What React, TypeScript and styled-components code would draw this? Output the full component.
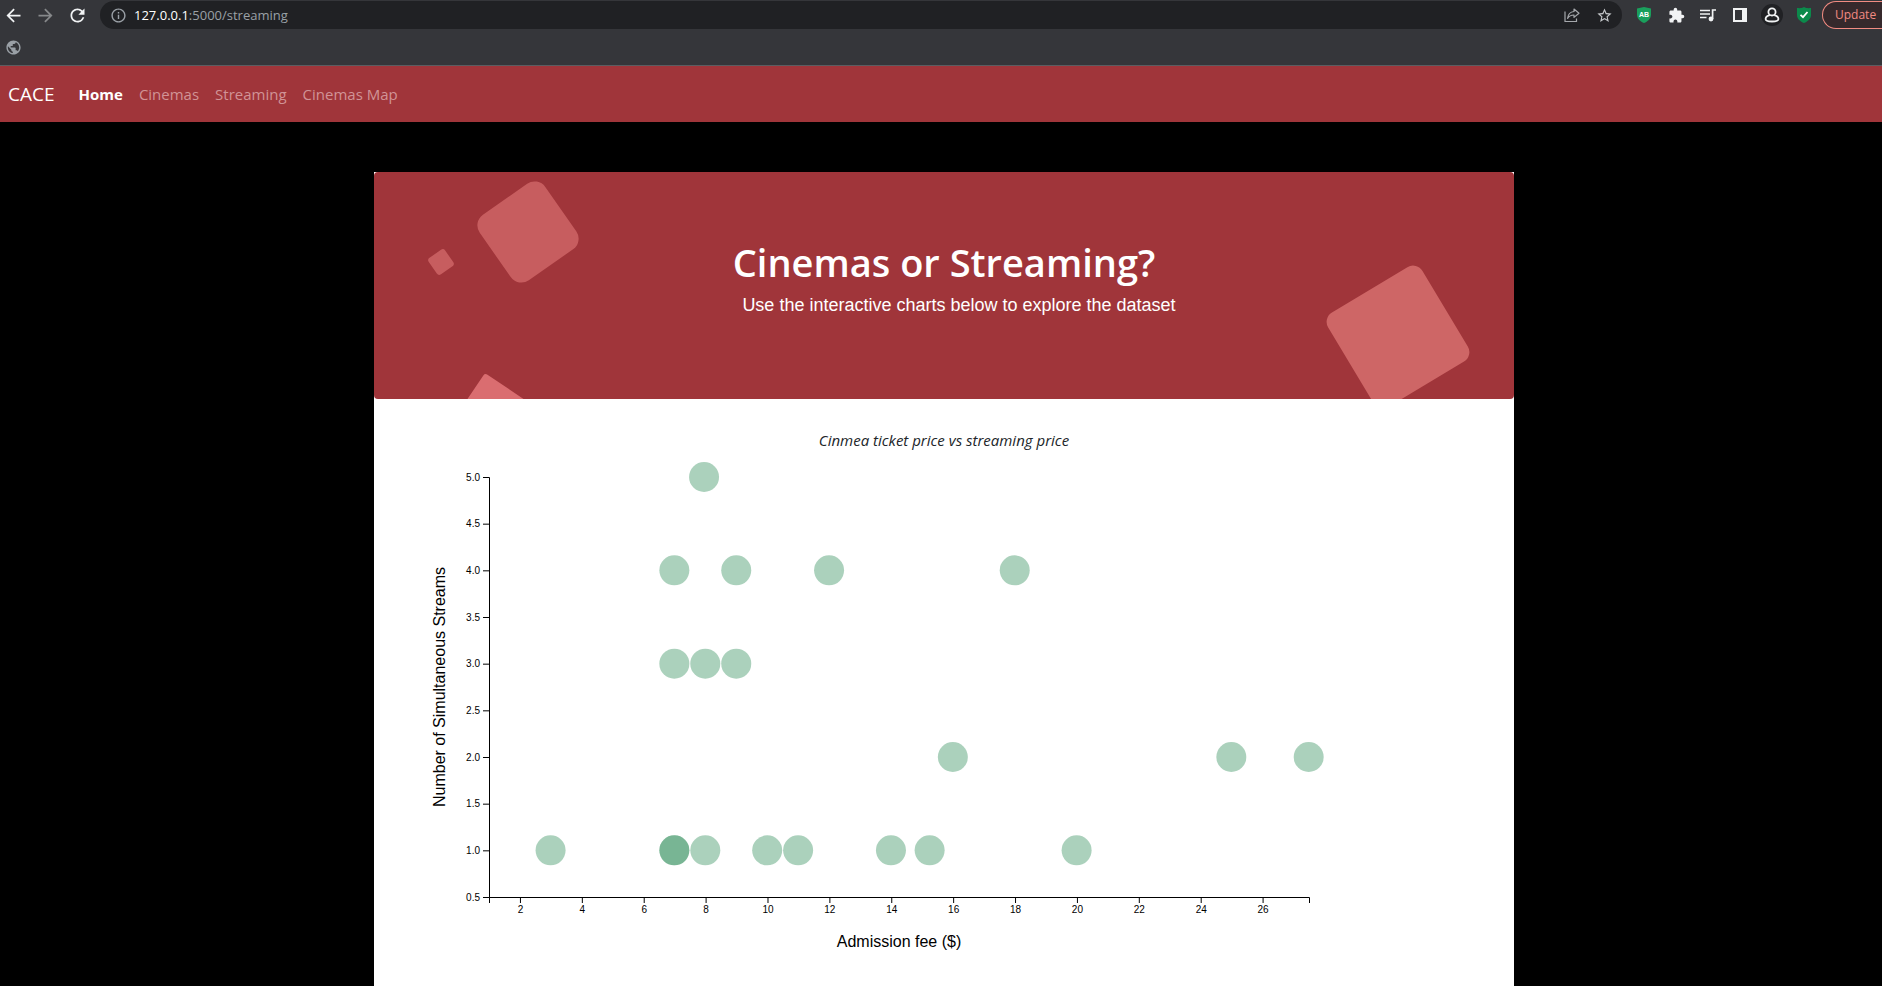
import React from "react";
import styled, { createGlobalStyle } from "styled-components";
import {
  MdArrowBack,
  MdArrowForward,
  MdExtension,
  MdInfoOutline,
  MdPublic,
  MdRefresh,
  MdStarOutline,
} from "react-icons/md";

const uiFont = `"Segoe UI", "Open Sans", "Noto Sans", sans-serif`;
const arial = `Arial, "Liberation Sans", sans-serif`;

const GlobalStyle = createGlobalStyle`
  *, *::before, *::after { box-sizing: border-box; }
  body {
    margin: 0;
    background: #000;
    font-family: ${uiFont};
    font-size: 16px;
    line-height: 24px;
  }
`;

const Page = styled.div`
  display: flex;
  flex-direction: column;
  min-height: 100vh;
`;

/* Browser chrome */

const Chrome = styled.header`
  background: #35363a;
  border-bottom: 1px solid #5b5d61;
  overflow: hidden;
`;

const Toolbar = styled.div`
  display: flex;
  align-items: center;
  height: 30px;
`;

const IconButton = styled.button<{ $dim?: boolean }>`
  display: flex;
  align-items: center;
  justify-content: center;
  flex: none;
  width: 32px;
  height: 28px;
  padding: 0;
  border: 0;
  background: none;
  color: ${(p) => (p.$dim ? "#86888a" : "#f1f3f4")};
`;

const NavButtons = styled.div`
  display: flex;
  margin-left: -3px;
  margin-right: 7px;
`;

const AddressBar = styled.div`
  display: flex;
  align-items: center;
  flex: 1;
  min-width: 0;
  height: 28px;
  padding: 0 2px;
  border-radius: 14px;
  background: #202124;
  color: #9aa0a6;
  font-size: 13px;
  line-height: 20px;
`;

const Url = styled.div`
  flex: 1;
  white-space: nowrap;
`;

const Host = styled.span`
  color: #fff;
`;

const Extensions = styled.div`
  display: flex;
  margin-left: 6px;
  margin-right: 2px;
`;

const Avatar = styled.span`
  display: flex;
  align-items: center;
  justify-content: center;
  width: 22px;
  height: 22px;
  border-radius: 50%;
  background: #202124;
`;

const UpdateButton = styled.button`
  flex: none;
  width: 60px;
  height: 28px;
  padding: 0 0 0 12px;
  border: 1px solid #f28b82;
  border-right: 0;
  border-radius: 14px 0 0 14px;
  background: #36292c;
  color: #f28b82;
  font-family: ${uiFont};
  font-size: 12px;
  line-height: 24px;
  text-align: left;
`;

const BookmarksBar = styled.div`
  display: flex;
  align-items: center;
  height: 35px;
  padding: 0 5px;
  color: #9aa0a6;
`;

/* Site */

const Navbar = styled.nav`
  display: flex;
  align-items: center;
  height: 56px;
  padding: 0 8px;
  background: #a0353a;
`;

const Brand = styled.a`
  margin-right: 16px;
  color: #fff;
  font-size: 19px;
  text-decoration: none;
`;

const NavLink = styled.a<{ $active?: boolean }>`
  padding: 0 8px;
  color: ${(p) => (p.$active ? "#fff" : "#d19396")};
  font-size: 15px;
  font-weight: ${(p) => (p.$active ? 700 : 400)};
  text-decoration: none;
`;

const Main = styled.main`
  display: flex;
  flex: 1;
  justify-content: center;
  padding: 50px 0 0 6px;
`;

const Card = styled.div`
  width: 100%;
  max-width: 1140px;
  background: #fff;
`;

const Hero = styled.section`
  position: relative;
  height: 227px;
  padding-top: 66px;
  border-radius: 4px;
  background: #a0353a;
  color: #fff;
  text-align: center;
  overflow: hidden;
`;

const HeroShapes = styled.svg`
  position: absolute;
  inset: 0;
`;

const HeroTitle = styled.h1`
  position: relative;
  margin: 0 0 7px;
  font-size: 38px;
  font-weight: 600;
  line-height: 48px;
`;

const HeroText = styled.p`
  position: relative;
  margin: 0;
  padding-left: 30px;
  font-family: ${arial};
  font-size: 18px;
  line-height: 24px;
`;

const ChartTitle = styled.h2`
  margin: 29px 0 8px;
  color: #212529;
  font-size: 15px;
  font-style: italic;
  font-weight: 500;
  line-height: 24px;
  text-align: center;
`;

const ChartSvg = styled.svg`
  display: block;
  width: 100%;
  height: 500px;
  font-family: ${arial};
`;

const PLOT_W = 820;
const PLOT_H = 420;
const X_MIN = 1;
const X_MAX = 27.5;
const Y_MIN = 0.5;
const Y_MAX = 5;

const sx = (v: number) => ((v - X_MIN) / (X_MAX - X_MIN)) * PLOT_W;
const sy = (v: number) => PLOT_H - ((v - Y_MIN) / (Y_MAX - Y_MIN)) * PLOT_H;

const xTicks = [2, 4, 6, 8, 10, 12, 14, 16, 18, 20, 22, 24, 26];
const yTicks = [0.5, 1, 1.5, 2, 2.5, 3, 3.5, 4, 4.5, 5];

const points: [number, number][] = [
  [7.95, 5],
  [6.99, 4], [8.99, 4], [11.99, 4], [17.99, 4],
  [6.99, 3], [7.99, 3], [8.99, 3],
  [15.99, 2], [24.99, 2], [27.49, 2],
  [2.99, 1], [6.99, 1], [6.99, 1], [7.99, 1], [9.99, 1], [10.99, 1],
  [13.99, 1], [15.24, 1], [19.99, 1],
];

function ScatterChart() {
  return (
    <ChartSvg role="img" aria-label="Admission fee against number of simultaneous streams">
      <g transform="translate(115 17)">
        <g stroke="#000" fill="none">
          <path d={`M-6 0.5H0.5V${PLOT_H + 0.5}H-6`} />
          <path d={`M0.5 ${PLOT_H + 6}V${PLOT_H + 0.5}H${PLOT_W + 0.5}V${PLOT_H + 6}`} />
          {yTicks.map((t) => (
            <line key={t} x1={-6} x2={0} y1={sy(t) + 0.5} y2={sy(t) + 0.5} />
          ))}
          {xTicks.map((t) => (
            <line key={t} x1={sx(t) + 0.5} x2={sx(t) + 0.5} y1={PLOT_H} y2={PLOT_H + 6} />
          ))}
        </g>
        <g fontSize={10}>
          {yTicks.map((t) => (
            <text key={t} x={-9} y={sy(t) + 0.5} dy="0.32em" textAnchor="end">
              {t.toFixed(1)}
            </text>
          ))}
          {xTicks.map((t) => (
            <text key={t} x={sx(t) + 0.5} y={PLOT_H + 9} dy="0.71em" textAnchor="middle">
              {t}
            </text>
          ))}
        </g>
        <g fill="seagreen" fillOpacity={0.4}>
          {points.map(([x, y], i) => (
            <circle key={i} cx={sx(x)} cy={sy(y)} r={15} />
          ))}
        </g>
        <g fontSize={16} textAnchor="middle">
          <text x={PLOT_W / 2} y={PLOT_H + 50}>Admission fee ($)</text>
          <text transform="rotate(-90)" x={-PLOT_H / 2} y={-44}>
            Number of Simultaneous Streams
          </text>
        </g>
      </g>
    </ChartSvg>
  );
}

export default function App() {
  return (
    <Page>
      <GlobalStyle />
      <Chrome>
        <Toolbar>
          <NavButtons>
            <IconButton aria-label="Back"><MdArrowBack size={21} /></IconButton>
            <IconButton aria-label="Forward" $dim><MdArrowForward size={21} /></IconButton>
            <IconButton aria-label="Reload"><MdRefresh size={21} /></IconButton>
          </NavButtons>
          <AddressBar>
            <IconButton aria-label="Site information" $dim><MdInfoOutline size={17} color="#9aa0a6" /></IconButton>
            <Url><Host>127.0.0.1</Host>:5000/streaming</Url>
            <IconButton aria-label="Share" $dim>
              <svg width="16" height="16" viewBox="0 0 16 16" fill="none" stroke="#a5a8ac" strokeWidth="1.2">
                <path d="M1 4.5V14.5H12.5V11.5" />
                <path d="M10 2L15 6.2L10 10.4V8C7 8 5 9 3.6 11.4C4 7.4 6 4.9 10 4.5Z" strokeLinejoin="round" />
              </svg>
            </IconButton>
            <IconButton aria-label="Bookmark"><MdStarOutline size={17} color="#c4c7ca" /></IconButton>
          </AddressBar>
          <Extensions>
            <IconButton aria-label="Ad blocker">
              <svg width="16" height="16" viewBox="0 0 16 16">
                <path d="M8 0L15 1.5V7.5C15 12 11.5 14.5 8 16C4.5 14.5 1 12 1 7.5V1.5Z" fill="#1a9f5c" />
                <text x="8" y="9.5" textAnchor="middle" fontSize="7" fontWeight="700" fontFamily="Liberation Sans" fill="#fff">AB</text>
              </svg>
            </IconButton>
            <IconButton aria-label="Extensions"><MdExtension size={17} /></IconButton>
            <IconButton aria-label="Media controls">
              <svg width="16" height="14" viewBox="0 0 16 14" fill="none" stroke="currentColor" strokeWidth="1.7">
                <path d="M0 2.5H10M0 6H10M0 9.5H6.5M12.6 11V2H16" />
                <circle cx="11" cy="11" r="2.4" fill="currentColor" stroke="none" />
              </svg>
            </IconButton>
            <IconButton aria-label="Side panel">
              <svg width="14" height="14" viewBox="0 0 14 14" fill="none" stroke="currentColor" strokeWidth="2">
                <path d="M1 1H13V13H1Z" />
                <path d="M9 1H13V13H9Z" fill="currentColor" stroke="none" />
              </svg>
            </IconButton>
            <IconButton aria-label="Profile">
              <Avatar>
                <svg width="16" height="16" viewBox="0 0 16 16" fill="none" stroke="currentColor" strokeWidth="1.8">
                  <circle cx="8" cy="4.9" r="3.6" />
                  <path d="M5.8 8.2C3 9 1.6 10.3 1.6 12C1.6 13.8 4 14.5 8 14.5S14.4 13.8 14.4 12C14.4 10.3 13 9 10.2 8.2" />
                </svg>
              </Avatar>
            </IconButton>
            <IconButton aria-label="Safe browsing">
              <svg width="16" height="16" viewBox="0 0 16 16">
                <path d="M8 0C10 1.3 12.5 1.3 15 1V8C15 12 11.5 14.5 8 16C4.5 14.5 1 12 1 8V1C3.5 1.3 6 1.3 8 0Z" fill="#0b8a4b" />
                <path d="M4.5 7.8L7 10.2L11.5 5" fill="none" stroke="#fff" strokeWidth="1.8" />
              </svg>
            </IconButton>
          </Extensions>
          <UpdateButton>Update</UpdateButton>
        </Toolbar>
        <BookmarksBar><MdPublic size={17} /></BookmarksBar>
      </Chrome>

      <Navbar>
        <Brand href="#">CACE</Brand>
        <NavLink href="#" $active>Home</NavLink>
        <NavLink href="#">Cinemas</NavLink>
        <NavLink href="#">Streaming</NavLink>
        <NavLink href="#">Cinemas Map</NavLink>
      </Navbar>

      <Main>
        <Card>
          <Hero>
            <HeroShapes width="1140" height="227" aria-hidden="true">
              <rect x="-40" y="-40" width="80" height="80" rx="13" fill="#c75d5f" transform="translate(154 60) rotate(-35)" />
              <rect x="-10" y="-10" width="20" height="20" rx="3" fill="#c75d5f" transform="translate(67 90) rotate(-35)" />
              <rect x="-55" y="-55" width="110" height="110" rx="11" fill="#ce6666" transform="translate(1024 165) rotate(-31)" />
              <rect width="80" height="80" rx="3" fill="#da6d70" transform="translate(111 201) rotate(34)" />
            </HeroShapes>
            <HeroTitle>Cinemas or Streaming?</HeroTitle>
            <HeroText>Use the interactive charts below to explore the dataset</HeroText>
          </Hero>
          <ChartTitle>Cinmea ticket price vs streaming price</ChartTitle>
          <ScatterChart />
        </Card>
      </Main>
    </Page>
  );
}
